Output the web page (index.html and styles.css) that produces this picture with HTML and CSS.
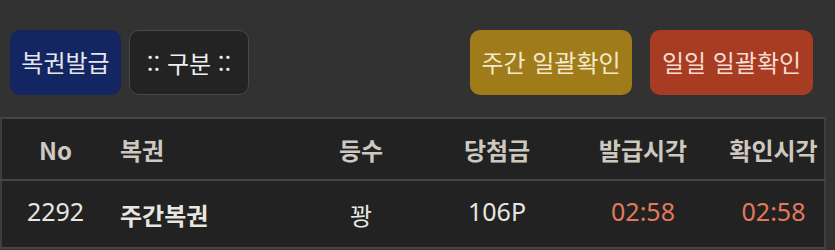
FILE: index.html
```html
<!DOCTYPE html>
<html lang="ko">
    <head>
        <meta charset="UTF-8" />
        <meta name="viewport" content="width=device-width, initial-scale=1.0" />
        <title>복권 발급</title>
        <link rel="stylesheet" href="styles.css">
    </head>

    <body>
        <div class="toolbar">
            <div class="btn issue">복권발급</div>
            <div class="btn select">:: 구분 ::</div>
            <div class="spacer"></div>
            <div class="btn weekly">주간 일괄확인</div>
            <div class="btn daily">일일 일괄확인</div>
        </div>

        <table class="list">
            <thead>
                <tr>
                    <th class="no">No</th>
                    <th class="name">복권</th>
                    <th class="rank">등수</th>
                    <th class="prize">당첨금</th>
                    <th class="time">발급시각</th>
                    <th class="time2">확인시각</th>
                </tr>
            </thead>
            <tbody>
                <tr>
                    <td class="no num">2292</td>
                    <td class="name">주간복권</td>
                    <td class="rank">꽝</td>
                    <td class="prize num">106P</td>
                    <td class="time num red">02:58</td>
                    <td class="time2 num red">02:58</td>
                </tr>
            </tbody>
        </table>
    </body>
</html>
```

FILE: styles.css
```css
* {
    padding: 0;
    margin: 0;
    box-sizing: border-box;
}

body {
    width: 835px;
    height: 250px;
    overflow: hidden;
    background-color: #323232;
    font-family: "Noto Sans CJK KR", "Noto Sans", sans-serif;
    color: #e6e4de;
}

.toolbar {
    display: flex;
    align-items: center;
    gap: 8px;
    padding: 30px 22px 0 10px;
}

.toolbar .spacer {
    flex: 1;
}

.btn {
    height: 65px;
    border-radius: 10px;
    font-size: 24px;
    line-height: 63px;
    text-align: center;
    white-space: nowrap;
}

.issue {
    width: 111px;
    background-color: #142661;
    color: #e4e6ee;
}

.select {
    width: 120px;
    background-color: #232323;
    border: 1px solid #484848;
    color: #f0f0f0;
}

.weekly {
    width: 162px;
    background-color: #a07b1a;
    color: #f4e8cc;
}

.daily {
    width: 163px;
    margin-left: 10px;
    background-color: #a83c22;
    color: #f6ddd2;
}

.list {
    width: 826px;
    margin-top: 22px;
    border-collapse: collapse;
    background-color: #222222;
    border-left: 2px solid #3e3e3e;
    border-right: 2px solid #3e3e3e;
}

.list th,
.list td {
    border-top: 2px solid #454545;
    border-bottom: 2px solid #454545;
    text-align: center;
    white-space: nowrap;
}

.list th {
    height: 62px;
    font-size: 24px;
    font-weight: 700;
    color: #cdc9c0;
}

.list td {
    height: 68px;
    font-size: 24px;
    color: #e8e6e0;
}

.list td.num {
    font-family: "Noto Sans", sans-serif;
    font-size: 25px;
    padding-bottom: 6px;
}

.list .no {
    width: 108px;
}

.list .name {
    width: 182px;
    padding-left: 11px;
    text-align: left;
}

.list td.name {
    font-weight: 700;
}

.list .rank {
    width: 140px;
}

.list .prize {
    width: 132px;
}

.list .time {
    width: 160px;
}

.list .red {
    color: #e2795c;
}
```
